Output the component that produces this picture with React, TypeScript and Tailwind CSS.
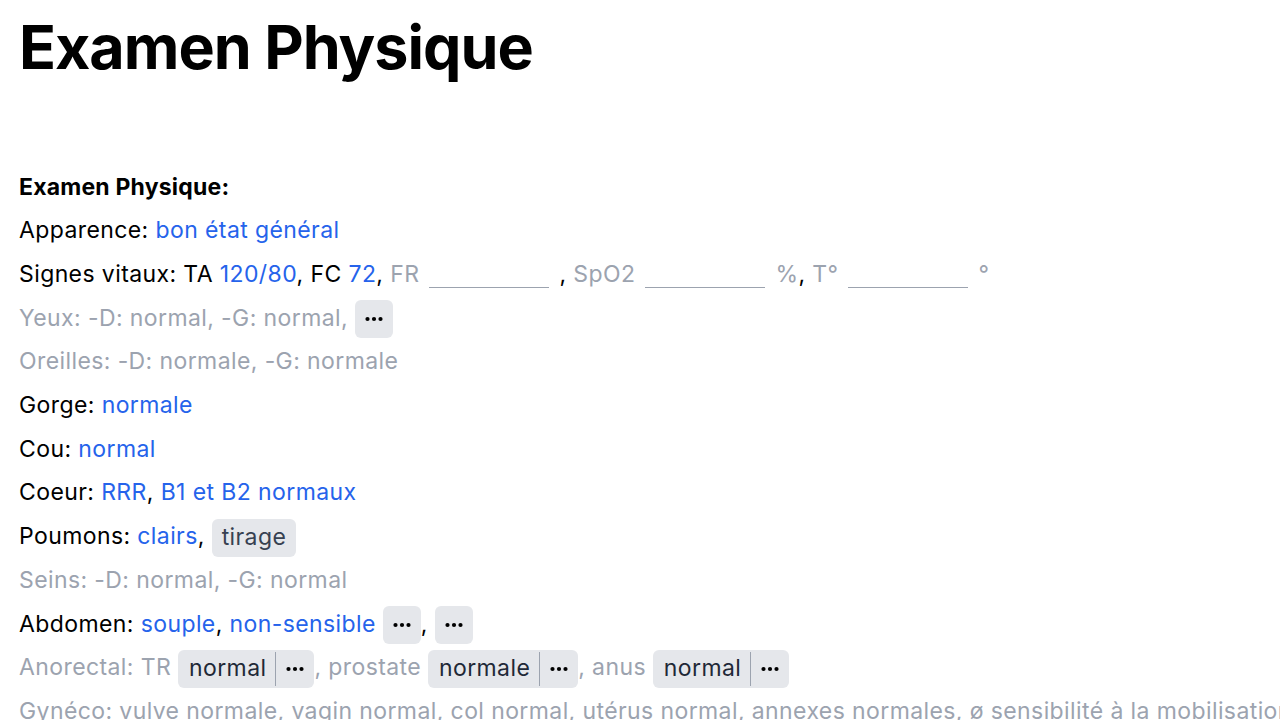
import React from 'react';

const Blue = ({ children }: { children: React.ReactNode }) => (
  <span className="text-[#2563eb]">{children}</span>
);

const DotsIcon = () => (
  <svg width="18" height="6" viewBox="0 0 18 6" className="block">
    <circle cx="2.5" cy="3" r="2.1" fill="#000" />
    <circle cx="9" cy="3" r="2.1" fill="#000" />
    <circle cx="15.5" cy="3" r="2.1" fill="#000" />
  </svg>
);

const Dots = () => (
  <span className="inline-flex items-center justify-center w-[38px] h-[38px] rounded-md bg-[#e5e7eb] align-middle">
    <DotsIcon />
  </span>
);

const Chip = ({ children }: { children: React.ReactNode }) => (
  <span className="inline-flex items-center h-[38px] px-[10px] rounded-md bg-[#e5e7eb] align-middle text-[#374151]">
    {children}
  </span>
);

const SplitChip = ({ label }: { label: string }) => (
  <span className="inline-flex items-stretch h-[38px] rounded-md bg-[#e5e7eb] align-middle text-[#1f2937]">
    <span className="flex items-center pl-[11px] pr-[9px]">{label}</span>
    <span className="w-px my-[2px] bg-[#9ca3af]" />
    <span className="w-[38px] flex items-center justify-center">
      <DotsIcon />
    </span>
  </span>
);

const Blank = () => (
  <span className="inline-block w-[120px] h-[22px] border-b border-[#9ca3af] align-baseline mx-[10px] -mb-[6px]" />
);

export default function App() {
  return (
    <div className="h-[720px] overflow-hidden bg-white px-[19px] font-['Inter','Noto_Sans',sans-serif] text-black">
      <h1 className="text-[61px] font-bold tracking-[-1px] leading-none pt-[17px]">Examen Physique</h1>
      <div className="mt-[87.5px] text-[23px] tracking-[0.4px] leading-[43.7px] whitespace-nowrap">
        <div className="font-bold tracking-[0.2px]">Examen Physique:</div>
        <div>Apparence: <Blue>bon état général</Blue></div>
        <div>
          Signes vitaux: TA <Blue>120/80</Blue>, FC <Blue>72</Blue>,{' '}
          <span className="text-[#9ca3af]">FR<Blank /></span>
          <span className="text-[#9ca3af]"><span className="text-black">,</span> SpO2<Blank />%</span>
          <span className="text-[#9ca3af]"><span className="text-black">,</span> T°<Blank />°</span>
        </div>
        <div className="text-[#9ca3af]">Yeux: -D: normal, -G: normal, <Dots /></div>
        <div className="text-[#9ca3af]">Oreilles: -D: normale, -G: normale</div>
        <div>Gorge: <Blue>normale</Blue></div>
        <div>Cou: <Blue>normal</Blue></div>
        <div>Coeur: <Blue>RRR</Blue>, <Blue>B1 et B2 normaux</Blue></div>
        <div>Poumons: <Blue>clairs</Blue>, <Chip>tirage</Chip></div>
        <div className="text-[#9ca3af]">Seins: -D: normal, -G: normal</div>
        <div>Abdomen: <Blue>souple</Blue>, <Blue>non-sensible</Blue> <Dots />, <Dots /></div>
        <div className="text-[#9ca3af]">
          Anorectal: TR <SplitChip label="normal" />, prostate <SplitChip label="normale" />, anus <SplitChip label="normal" />
        </div>
        <div className="text-[#9ca3af]">
          Gynéco: vulve normale, vagin normal, col normal, utérus normal, annexes normales, ø sensibilité à la mobilisation du col
        </div>
      </div>
    </div>
  );
}
